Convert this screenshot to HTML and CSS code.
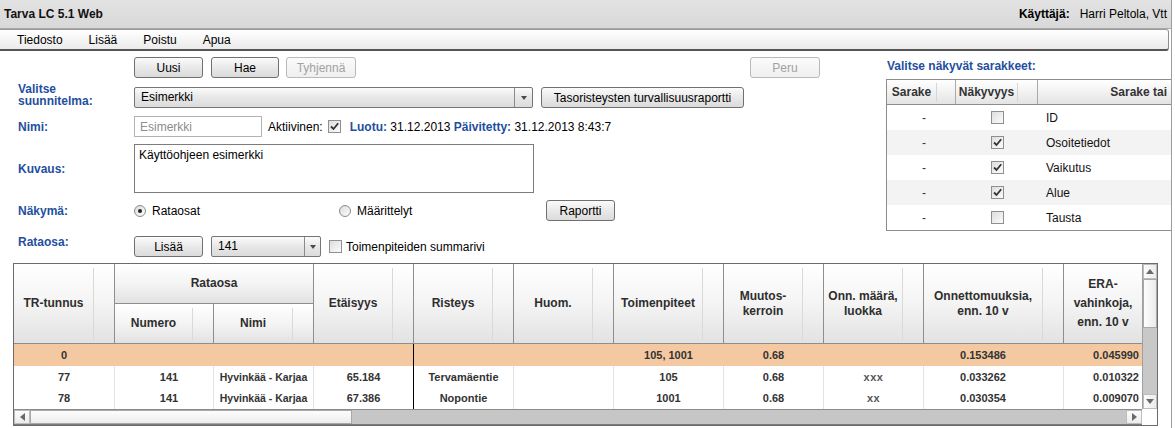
FILE: index.html
```html
<!DOCTYPE html>
<html lang="fi">
<head>
<meta charset="utf-8">
<title>Tarva LC 5.1 Web</title>
<link rel="stylesheet" href="styles.css">
</head>
<body>
<div class="app">
  <header class="titlebar">
    <span class="app-title">Tarva LC 5.1 Web</span>
    <span class="user"><span class="user-label">Käyttäjä:</span><span>Harri Peltola, Vtt</span></span>
  </header>
  <nav class="menubar">
    <span class="menu-item">Tiedosto</span>
    <span class="menu-item">Lisää</span>
    <span class="menu-item">Poistu</span>
    <span class="menu-item">Apua</span>
  </nav>
  <div class="main">
    <section class="form">
      <div class="row row-buttons">
        <span class="label"></span>
        <button class="btn w69">Uusi</button>
        <button class="btn w68 ml8">Hae</button>
        <button class="btn w70 ml7" disabled>Tyhjennä</button>
        <button class="btn w70 peru" disabled>Peru</button>
      </div>
      <div class="row row-plan">
        <span class="label label-2line">Valitse<br>suunnitelma:</span>
        <div class="select select-plan"><span class="select-value">Esimerkki</span><span class="select-arrow"><i class="caret"></i></span></div>
        <button class="btn btn-safety">Tasoristeysten turvallisuusraportti</button>
      </div>
      <div class="row row-name">
        <span class="label">Nimi:</span>
        <input class="text-input" type="text" value="Esimerkki" readonly>
        <span class="active-label">Aktiivinen:</span>
        <span class="checkbox cb-active"><svg width="11" height="11" viewBox="0 0 11 11"><path d="M2 5.5 L4.5 8 L9.2 2.2" fill="none" stroke="#333" stroke-width="1.8"/></svg></span>
        <span class="meta"><b class="blue">Luotu:</b> 31.12.2013 <b class="blue">Päivitetty:</b> 31.12.2013 8:43:7</span>
      </div>
      <div class="row row-desc">
        <span class="label">Kuvaus:</span>
        <textarea class="textarea" readonly>Käyttöohjeen esimerkki</textarea>
      </div>
      <div class="row row-view">
        <span class="label">Näkymä:</span>
        <span class="radio-opt opt1"><span class="radio checked"></span>Rataosat</span>
        <span class="radio-opt opt2"><span class="radio"></span>Määrittelyt</span>
        <button class="btn w69">Raportti</button>
      </div>
      <div class="row row-section">
        <span class="label label-top">Rataosa:</span>
        <button class="btn w69">Lisää</button>
        <div class="select select-section"><span class="select-value">141</span><span class="select-arrow narrow"><i class="caret"></i></span></div>
        <span class="checkbox cb-sum"></span>
        <span class="cb-text">Toimenpiteiden summarivi</span>
      </div>
    </section>
    <aside class="colpanel">
      <div class="panel-title">Valitse näkyvät sarakkeet:</div>
      <div class="ptable">
        <div class="prow phead">
          <span class="ph"><span class="ph-lbl">Sarake</span><span class="ph-hnd"></span></span>
          <span class="ph"><span class="ph-lbl">Näkyvyys</span><span class="ph-hnd"></span></span>
          <span class="ph ph-last">Sarake tai</span>
        </div>
        <div class="prow"><span class="pc-dash">-</span><span class="pc-cb"><span class="checkbox"></span></span><span class="pc-name">ID</span></div>
        <div class="prow alt"><span class="pc-dash">-</span><span class="pc-cb"><span class="checkbox"><svg width="11" height="11" viewBox="0 0 11 11"><path d="M2 5.5 L4.5 8 L9.2 2.2" fill="none" stroke="#333" stroke-width="1.8"/></svg></span></span><span class="pc-name">Osoitetiedot</span></div>
        <div class="prow"><span class="pc-dash">-</span><span class="pc-cb"><span class="checkbox"><svg width="11" height="11" viewBox="0 0 11 11"><path d="M2 5.5 L4.5 8 L9.2 2.2" fill="none" stroke="#333" stroke-width="1.8"/></svg></span></span><span class="pc-name">Vaikutus</span></div>
        <div class="prow alt"><span class="pc-dash">-</span><span class="pc-cb"><span class="checkbox"><svg width="11" height="11" viewBox="0 0 11 11"><path d="M2 5.5 L4.5 8 L9.2 2.2" fill="none" stroke="#333" stroke-width="1.8"/></svg></span></span><span class="pc-name">Alue</span></div>
        <div class="prow"><span class="pc-dash">-</span><span class="pc-cb"><span class="checkbox"></span></span><span class="pc-name">Tausta</span></div>
      </div>
    </aside>
  </div>

  <div class="grid">
    <div class="gtop">
      <div class="gtable">
        <div class="ghead">
          <div class="hc span2"><span class="lbl">TR-tunnus</span><span class="hnd"></span></div>
          <div class="hc group"><span class="lbl">Rataosa</span></div>
          <div class="hc span2"><span class="lbl">Etäisyys</span><span class="hnd"></span></div>
          <div class="hc span2"><span class="lbl">Risteys</span><span class="hnd"></span></div>
          <div class="hc span2"><span class="lbl">Huom.</span><span class="hnd"></span></div>
          <div class="hc span2"><span class="lbl">Toimenpiteet</span><span class="hnd"></span></div>
          <div class="hc span2"><span class="lbl">Muutos-<br>kerroin</span><span class="hnd"></span></div>
          <div class="hc span2"><span class="lbl">Onn. määrä,<br>luokka</span><span class="hnd"></span></div>
          <div class="hc span2"><span class="lbl">Onnettomuuksia,<br>enn. 10 v</span><span class="hnd"></span></div>
          <div class="hc span2 hc-last"><span class="lbl lbl-era">ERA-<br>vahinkoja,<br>enn. 10 v</span></div>
          <div class="hc sub-num"><span class="lbl">Numero</span><span class="hnd"></span></div>
          <div class="hc sub-name"><span class="lbl">Nimi</span><span class="hnd"></span></div>
        </div>
        <div class="drow sum">
          <span>0</span><span></span><span></span><span></span><span></span><span></span><span>105, 1001</span><span>0.68</span><span></span><span class="c-onn">0.153486</span><span class="c-era">0.045990</span>
        </div>
        <div class="drow">
          <span>77</span><span class="c-num">141</span><span class="c-name">Hyvinkää - Karjaa</span><span>65.184</span><span>Tervamäentie</span><span></span><span>105</span><span>0.68</span><span class="c-cls">xxx</span><span class="c-onn">0.033262</span><span class="c-era">0.010322</span>
        </div>
        <div class="drow last">
          <span>78</span><span class="c-num">141</span><span class="c-name">Hyvinkää - Karjaa</span><span>67.386</span><span>Nopontie</span><span></span><span>1001</span><span>0.68</span><span class="c-cls">xx</span><span class="c-onn">0.030354</span><span class="c-era">0.009070</span>
        </div>
      </div>
      <div class="vscroll">
        <span class="sb-btn"><i class="tri-up"></i></span>
        <span class="v-thumb"></span>
        <span class="v-track"></span>
        <span class="sb-btn"><i class="tri-down"></i></span>
      </div>
    </div>
    <div class="gbot">
      <div class="hscroll">
        <span class="sb-btn"><i class="tri-left"></i></span>
        <span class="h-thumb"></span>
        <span class="h-track"></span>
        <span class="sb-btn"><i class="tri-right"></i></span>
      </div>
      <span class="corner"></span>
    </div>
  </div>
</div>
</body>
</html>
```

FILE: styles.css
```css
* { box-sizing: border-box; }
html, body { margin: 0; padding: 0; }
body {
  font-family: "Liberation Sans", Arial, sans-serif;
  font-size: 12px;
  color: #000;
  background: #fff;
  width: 1175px;
  height: 428px;
  overflow: hidden;
}
.app {
  width: 1172px;
  height: 428px;
  border-right: 1px solid #9c9c9c;
  display: flex;
  flex-direction: column;
}

/* title bar */
.titlebar {
  height: 29px;
  flex: none;
  display: flex;
  align-items: center;
  justify-content: space-between;
  padding: 0 4px 1px 4px;
  background: linear-gradient(#e3e3e3, #d8d8d8);
  border-bottom: 1px solid #a9a9a9;
}
.app-title { font-weight: bold; color: #111; }
.user-label { font-weight: bold; margin-right: 10px; }

/* menu */
.menubar {
  height: 22px;
  flex: none;
  display: flex;
  align-items: center;
  padding-left: 4px;
  margin-right: 2px;
  background: linear-gradient(#ffffff, #ebebeb);
  border-top: 1px solid #9a9a9a;
  border-right: 1px solid #8c8c8c;
  border-bottom: 2px solid #555;
  border-radius: 0 3px 3px 0;
}
.menu-item { padding: 0 13px; }

/* main */
.main {
  height: 212px;
  flex: none;
  display: flex;
}
.form {
  width: 886px;
  flex: none;
  padding-left: 18px;
  display: flex;
  flex-direction: column;
}
.row { display: flex; align-items: center; flex: none; }
.label {
  width: 116px;
  flex: none;
  color: #1f4fa0;
  font-weight: bold;
}
.label-2line { line-height: 12px; align-self: flex-start; padding-top: 1px; }
.label-top { line-height: 12px; align-self: flex-start; }
.row-buttons { margin-top: 6px; height: 21px; }
.row-plan { margin-top: 4px; height: 26px; align-items: flex-end; }
.row-name { margin-top: 8px; height: 21px; }
.row-desc { margin-top: 7px; height: 49px; }
.row-view { margin-top: 7px; height: 21px; }
.row-section { margin-top: 15px; height: 21px; }

.btn {
  height: 21px;
  padding: 0;
  font-family: "Liberation Sans", Arial, sans-serif;
  font-size: 12px;
  color: #000;
  border: 1px solid #707070;
  border-radius: 3px;
  background: linear-gradient(#fbfbfb, #e9e9e9 50%, #dbdbdb);
  flex: none;
}
.btn:disabled {
  color: #a2a2a2;
  border-color: #b9b9b9;
  background: linear-gradient(#fbfbfb, #efefef);
}
.w68 { width: 68px; }
.w69 { width: 69px; }
.w70 { width: 70px; }
.ml7 { margin-left: 7px; }
.ml8 { margin-left: 8px; }
.peru { margin-left: 394px; }
.btn-safety { width: 203px; margin-left: 8px; }

.select {
  height: 21px;
  display: flex;
  border: 1px solid #767676;
  border-radius: 2px;
  background: linear-gradient(#fbfbfb, #e7e7e7 50%, #dcdcdc);
  flex: none;
}
.select-plan { width: 399px; }
.select-section { width: 110px; margin-left: 8px; }
.select-value { flex: 1; padding-left: 6px; line-height: 19px; }
.select-arrow {
  width: 18px;
  border-left: 1px solid #8a8a8a;
  display: flex;
  align-items: center;
  justify-content: center;
}
.select-arrow.narrow { width: 16px; }
.caret {
  width: 0; height: 0;
  border-left: 3.5px solid transparent;
  border-right: 3.5px solid transparent;
  border-top: 4px solid #4a4a4a;
}

.text-input {
  width: 128px;
  height: 21px;
  border: 1px solid #b3b3b3;
  padding: 0 0 0 5px;
  font-family: "Liberation Sans", Arial, sans-serif;
  font-size: 12px;
  color: #8c8c8c;
  background: #fff;
  outline: none;
  flex: none;
}
.active-label { margin-left: 6px; }
.checkbox {
  width: 13px;
  height: 13px;
  border: 1px solid #8e8f8f;
  background: linear-gradient(135deg, #dedede, #fbfbfb);
  display: inline-flex;
  align-items: center;
  justify-content: center;
  flex: none;
}
.checkbox svg { display: block; }
.cb-active { margin-left: 5px; }
.meta { margin-left: 9px; }
.blue { color: #1f4fa0; }

.textarea {
  width: 400px;
  height: 49px;
  border: 1px solid #7c7c7c;
  padding: 3px 4px;
  font-family: "Liberation Sans", Arial, sans-serif;
  font-size: 12px;
  line-height: 14px;
  color: #000;
  resize: none;
  outline: none;
  flex: none;
}

.radio-opt { display: flex; align-items: center; flex: none; }
.opt1 { width: 205px; }
.opt2 { width: 207px; }
.radio {
  width: 12px;
  height: 12px;
  border-radius: 50%;
  border: 1px solid #8a8a8a;
  background: linear-gradient(135deg, #dcdcdc, #fcfcfc);
  margin-right: 6px;
  display: flex;
  align-items: center;
  justify-content: center;
}
.radio.checked::before {
  content: "";
  width: 4px;
  height: 4px;
  border-radius: 50%;
  background: #222;
}
.cb-sum { margin-left: 8px; }
.cb-text { margin-left: 4px; }

/* right column panel */
.colpanel {
  flex: 1;
  overflow: hidden;
  padding-top: 8px;
}
.panel-title {
  color: #1f4fa0;
  font-weight: bold;
  line-height: 14px;
  padding-left: 1px;
}
.ptable {
  margin-top: 6px;
  width: 293px;
  border: 1px solid #8c8c8c;
}
.prow {
  display: grid;
  grid-template-columns: 69px 82px 140px;
  height: 25px;
  align-items: center;
}
.prow.alt { background: #f3f3f3; }
.phead {
  height: 25px;
  align-items: stretch;
  background: linear-gradient(#ffffff, #e4e4e4);
  border-bottom: 1px solid #8c8c8c;
}
.ph {
  display: flex;
  border-right: 1px solid #a9a9a9;
  font-weight: bold;
  color: #333;
}
.ph-lbl { flex: 1; display: flex; align-items: center; justify-content: center; }
.ph-hnd { width: 19px; border-left: 1px solid #d6d6d6; margin: 3px 0 2px; }
.ph:nth-child(2) .ph-hnd { width: 20px; }
.ph-last {
  border-right: none;
  align-items: center;
  justify-content: flex-end;
  padding-right: 11px;
  white-space: nowrap;
}
.pc-dash { text-align: center; padding-left: 5px; color: #333; }
.pc-cb { display: flex; justify-content: center; }
.pc-name { padding-left: 8px; color: #111; }

/* data grid */
.grid {
  margin-left: 13px;
  width: 1145px;
  height: 163px;
  border: 1px solid #6c6c6c;
  display: flex;
  flex-direction: column;
  flex: none;
}
.gtop { display: flex; height: 145px; }
.gtable { width: 1128px; overflow: hidden; }
.ghead {
  display: grid;
  grid-template-columns: 101px 99px 100px 100px 100px 100px 110px 100px 100px 140px 78px;
  grid-template-rows: 40px 40px;
  height: 80px;
}
.hc {
  display: flex;
  border-right: 1px solid #8e8e8e;
  border-bottom: 1px solid #8e8e8e;
  background: linear-gradient(#ffffff, #f4f4f4 50%, #e2e2e2);
  font-weight: bold;
  color: #2e2e2e;
}
.hc.span2 { grid-row: 1 / 3; }
.hc.group { grid-column: 2 / 4; grid-row: 1; }
.hc.sub-num { grid-column: 2; grid-row: 2; }
.hc.sub-name { grid-column: 3; grid-row: 2; }
.hc-last { border-right: none; }
.lbl {
  flex: 1;
  display: flex;
  align-items: center;
  justify-content: center;
  text-align: center;
  line-height: 15px;
}
.lbl-era { line-height: 19px; }
.hnd {
  width: 21px;
  flex: none;
  border-left: 1px solid #d9d9d9;
  margin: 4px 0 3px;
}
.drow {
  display: grid;
  grid-template-columns: 101px 99px 100px 100px 100px 100px 110px 100px 100px 140px 78px;
  height: 22px;
  font-size: 11px;
  font-weight: bold;
  color: #333;
}
.drow.last { height: 21px; }
.drow.sum { background: #f4c9a2; }
.drow > span {
  border-right: 1px solid #e3e3e3;
  text-align: center;
  line-height: 22px;
  white-space: nowrap;
  overflow: hidden;
}
.drow.last > span { line-height: 21px; }
.drow > span:nth-child(4) { border-right-color: #000; }
.drow.sum > span { border-right-color: transparent; }
.drow.sum > span:nth-child(4) { border-right-color: #000; }
.drow > .c-num { padding-left: 10px; }
.drow > .c-name { font-size: 10.5px; }
.drow > .c-onn { padding-right: 21px; }
.drow > .c-era { text-align: right; padding-right: 3px; border-right: none; }
.drow > .c-cls { color: #555; letter-spacing: 0.5px; }

/* scrollbars */
.vscroll {
  width: 15px;
  display: flex;
  flex-direction: column;
  background: #c8c8c8;
  border-left: 1px solid #a0a0a0;
}
.sb-btn {
  width: 15px;
  height: 15px;
  flex: none;
  display: flex;
  align-items: center;
  justify-content: center;
  background: linear-gradient(90deg, #fcfcfc, #ececec);
  border: 1px solid #bcbcbc;
}
.vscroll .sb-btn { width: 14px; }
.v-thumb {
  height: 49px;
  flex: none;
  background: linear-gradient(90deg, #fdfdfd, #ebebeb);
  border: 1px solid #a8a8a8;
}
.v-track { flex: 1; }
.gbot { display: flex; height: 16px; }
.hscroll {
  width: 1128px;
  height: 16px;
  display: flex;
  background: #c6c6c6;
  border-top: 1px solid #8c8c8c;
  border-bottom: 1px solid #7a7a7a;
}
.hscroll .sb-btn { width: 16px; height: 14px; background: linear-gradient(#fcfcfc, #ececec); }
.h-thumb {
  width: 322px;
  flex: none;
  background: linear-gradient(#fdfdfd, #ececec);
  border: 1px solid #a8a8a8;
}
.h-track { flex: 1; }
.corner { width: 15px; background: #fff; }
.tri-up, .tri-down, .tri-left, .tri-right { width: 0; height: 0; display: block; }
.tri-up { border-left: 4px solid transparent; border-right: 4px solid transparent; border-bottom: 5px solid #6a6a6a; }
.tri-down { border-left: 4px solid transparent; border-right: 4px solid transparent; border-top: 5px solid #6a6a6a; }
.tri-left { border-top: 4px solid transparent; border-bottom: 4px solid transparent; border-right: 5px solid #6a6a6a; }
.tri-right { border-top: 4px solid transparent; border-bottom: 4px solid transparent; border-left: 5px solid #6a6a6a; }
```
